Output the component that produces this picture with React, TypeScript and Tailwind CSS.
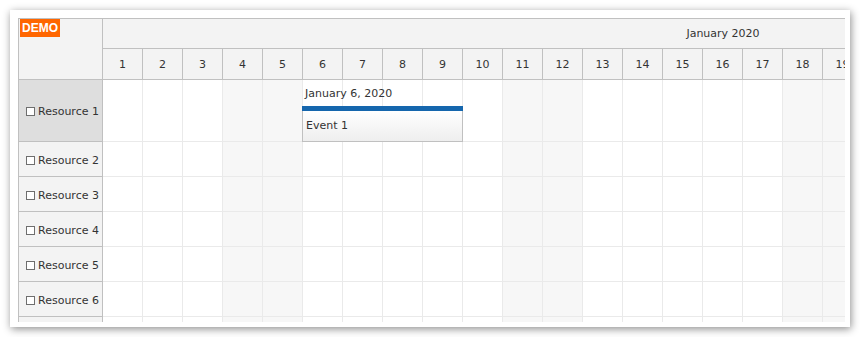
import React from 'react';

// Zasoby i dni stycznia 2020
const resources = ['Resource 1', 'Resource 2', 'Resource 3', 'Resource 4', 'Resource 5', 'Resource 6', ''];
const days = Array.from({ length: 31 }, (_, i) => i + 1);
const weekend = [4, 5, 11, 12, 18, 19, 25, 26];

function Checkbox() {
  return <span className="inline-block w-[9px] h-[9px] border border-[#6e6e6e] bg-white mr-[3px] shrink-0" />;
}

export default function App() {
  return (
    <div className="w-[860px] h-[337px] bg-white p-[10px] text-[#333] text-[11px]" style={{ fontFamily: '"DejaVu Sans", Tahoma, sans-serif' }}>
      <div className="w-[840px] h-[317px] bg-white pt-[8px] pl-[8px] shadow-[1px_2px_8px_rgba(0,0,0,0.45)]">
        <div className="w-[827px] h-[304px] overflow-hidden border-t border-l border-[#c0c0c0] flex items-start">
          {/* lewa kolumna z zasobami */}
          <div className="w-[84px] shrink-0 flex flex-col">
            <div className="relative h-[61px] shrink-0 bg-[#f3f3f3] border-r border-b border-[#c0c0c0] box-border">
              <span className="absolute left-[1px] top-0 h-[18px] px-[2px] flex items-center bg-[#ff6600] text-white font-bold text-[12px]" style={{ fontFamily: '"Liberation Sans", Arial, sans-serif' }}>
                DEMO
              </span>
            </div>
            {resources.map((r, i) => (
              <div
                key={i}
                className={`${i === 0 ? 'h-[62px] bg-[#dedede]' : 'h-[35px] bg-[#f3f3f3]'} shrink-0 border-r border-b border-[#c0c0c0] flex items-center pl-[7px] pt-[2px]`}
              >
                {r && (
                  <>
                    <Checkbox />
                    <span className="text-[11px] leading-none">{r}</span>
                  </>
                )}
              </div>
            ))}
          </div>

          {/* siatka */}
          <div className="flex flex-col shrink-0">
            <div className="w-[1240px] h-[30px] pt-[2px] bg-[#f3f3f3] border-b border-[#c0c0c0] flex items-center justify-center shrink-0">
              January 2020
            </div>
            <div className="flex h-[31px] shrink-0">
              {days.map((d) => (
                <div key={d} className="w-[40px] h-[31px] pt-[2px] shrink-0 bg-[#f3f3f3] border-r border-b border-[#c0c0c0] flex items-center justify-center">
                  {d}
                </div>
              ))}
            </div>
            <div className="relative">
              {resources.map((r, i) => (
                <div key={i} className={`flex ${i === 0 ? 'h-[62px]' : 'h-[35px]'} shrink-0`}>
                  {days.map((d) => (
                    <div
                      key={d}
                      className={`w-[40px] h-full shrink-0 border-r border-b border-[#eaeaea] ${weekend.includes(d) ? 'bg-[#f7f7f7]' : 'bg-white'}`}
                    />
                  ))}
                </div>
              ))}

              {/* wydarzenie */}
              <div className="absolute left-[199px] top-0 w-[161px] h-[62px] flex flex-col">
                <div className="h-[26px] flex items-center pl-[3px] pt-[2px]">January 6, 2020</div>
                <div className="h-[5px] bg-[#1566ad]" />
                <div className="h-[31px] border border-t-0 border-[#c0c0c0] bg-gradient-to-b from-white to-[#eeeeee] flex items-center pl-[3px] pt-[1px]">
                  Event 1
                </div>
              </div>
            </div>
          </div>
        </div>
      </div>
    </div>
  );
}
